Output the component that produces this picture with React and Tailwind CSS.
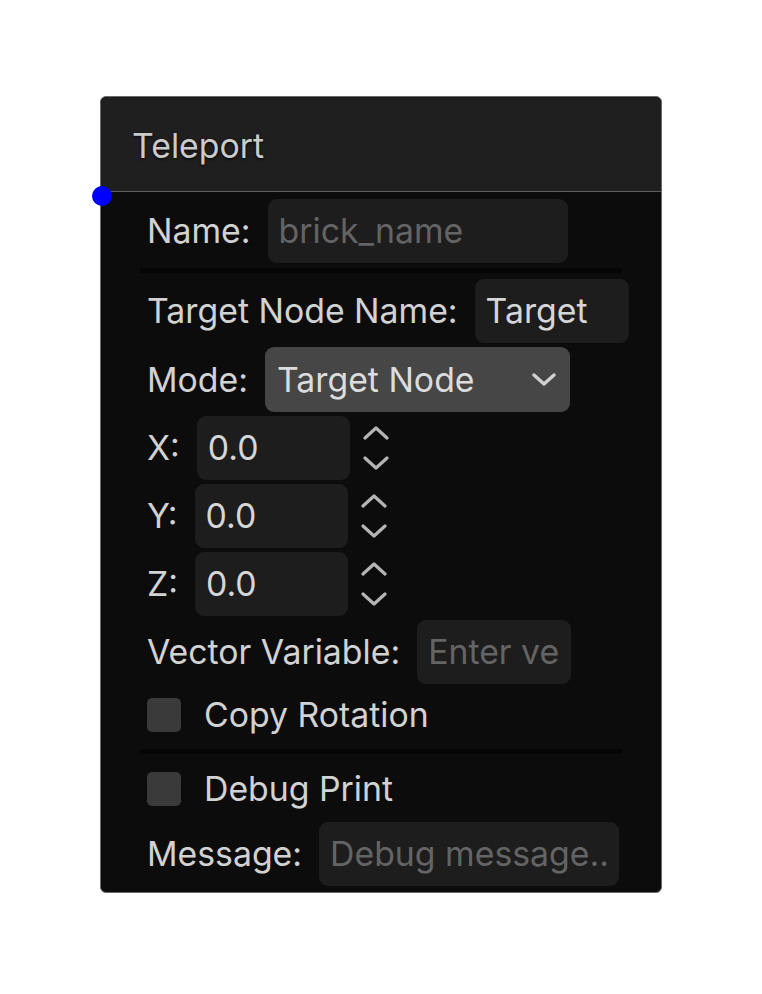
import React, { useState } from 'react';

const font = { fontFamily: 'Inter, "Noto Sans", sans-serif' };

// Small up/down chevrons beside numeric fields
const Spinner = () => (
  <div className="flex flex-col items-center justify-center gap-[14px] ml-[13px]">
    <svg width="26" height="16" viewBox="0 0 26 16" fill="none">
      <path d="M2 13 L13 3 L24 13" stroke="#b5b5b5" strokeWidth="3.2" strokeLinecap="round" strokeLinejoin="round" />
    </svg>
    <svg width="26" height="16" viewBox="0 0 26 16" fill="none">
      <path d="M2 3 L13 13 L24 3" stroke="#b5b5b5" strokeWidth="3.2" strokeLinecap="round" strokeLinejoin="round" />
    </svg>
  </div>
);

const Label = ({ children }) => (
  <span className="text-[33.8px] leading-none text-[#d2d2d2] whitespace-nowrap mr-[17px]">{children}</span>
);

const TextField = ({ value, placeholder, width }) => (
  <div
    className={`h-[64px] ${width} shrink-0 rounded-[9px] bg-[#1d1d1d] flex items-center pl-[11px] overflow-hidden`}
  >
    {value ? (
      <span className="text-[33.8px] leading-none text-[#d6d6d6] whitespace-nowrap">{value}</span>
    ) : (
      <span className="text-[33.8px] leading-none text-[#646464] whitespace-nowrap">{placeholder}</span>
    )}
  </div>
);

const Checkbox = ({ label, checked, onChange }) => (
  <button onClick={onChange} className="flex items-center h-[34px]">
    <span className={`w-[34px] h-[34px] rounded-[5px] ${checked ? 'bg-[#5a5a5a]' : 'bg-[#3a3a3a]'}`}></span>
    <span className="ml-[23px] text-[33.8px] leading-none text-[#d2d2d2]">{label}</span>
  </button>
);

const Divider = () => <div className="h-[5px] bg-[#050505] ml-[-7px]"></div>;

export default function App() {
  const [copyRot, setCopyRot] = useState(false);
  const [debug, setDebug] = useState(false);

  return (
    <div className="w-[762px] h-[994px] bg-white pt-[96px] pl-[100px]" style={font}>
      <div className="relative w-[562px] h-[797px] rounded-[6px] border border-[#6a6a6a] bg-[#0c0c0c] overflow-visible">
        {/* header */}
        <div className="h-[95px] bg-[#1f1f1f] rounded-t-[6px] border-b border-[#5e5e5e] flex items-center pl-[31px] pt-[3px]">
          <span className="text-[33.8px] leading-none text-[#cbcbcb] [text-shadow:0_1px_3px_rgba(0,0,0,0.9)]">Teleport</span>
        </div>

        {/* input socket */}
        <span className="absolute left-[-9px] top-[89px] w-[20px] h-[20px] rounded-full bg-[#0000ff]"></span>

        {/* body */}
        <div className="pl-[46px] pr-[39px] pt-[7px]">
          <div className="flex items-center h-[64px]">
            <Label>Name:</Label>
            <TextField placeholder="brick_name" width="w-[300px]" />
          </div>

          <div className="mt-[5px]"><Divider /></div>

          <div className="mt-[6px] flex flex-col gap-[4px]">
            <div className="flex items-center h-[64px]">
              <Label>Target Node Name:</Label>
              <TextField value="Target" width="w-[154px]" />
            </div>

            <div className="flex items-center h-[65px]">
              <Label>Mode:</Label>
              <div className="h-[65px] w-[305px] shrink-0 rounded-[9px] bg-[#464646] flex items-center justify-between pl-[12px] pr-[14px]">
                <span className="text-[33.8px] leading-none text-[#dcdcdc] whitespace-nowrap">Target Node</span>
                <svg width="24" height="14" viewBox="0 0 24 14" fill="none">
                  <path d="M2 2 L12 11 L22 2" stroke="#d0d0d0" strokeWidth="3.4" strokeLinecap="round" strokeLinejoin="round" />
                </svg>
              </div>
            </div>

            {['X:', 'Y:', 'Z:'].map((axis) => (
              <div key={axis} className="flex items-center h-[64px]">
                <Label>{axis}</Label>
                <TextField value="0.0" width="w-[153px]" />
                <Spinner />
              </div>
            ))}

            <div className="flex items-center h-[64px]">
              <Label>Vector Variable:</Label>
              <TextField placeholder="Enter ve" width="w-[154px]" />
            </div>
          </div>

          <div className="mt-[14px]">
            <Checkbox label="Copy Rotation" checked={copyRot} onChange={() => setCopyRot(!copyRot)} />
          </div>

          <div className="mt-[17px]"><Divider /></div>

          <div className="mt-[18px]">
            <Checkbox label="Debug Print" checked={debug} onChange={() => setDebug(!debug)} />
          </div>

          <div className="mt-[15px] flex items-center h-[65px]">
            <Label>Message:</Label>
            <TextField placeholder="Debug message.." width="w-[300px]" />
          </div>
        </div>
      </div>
    </div>
  );
}
